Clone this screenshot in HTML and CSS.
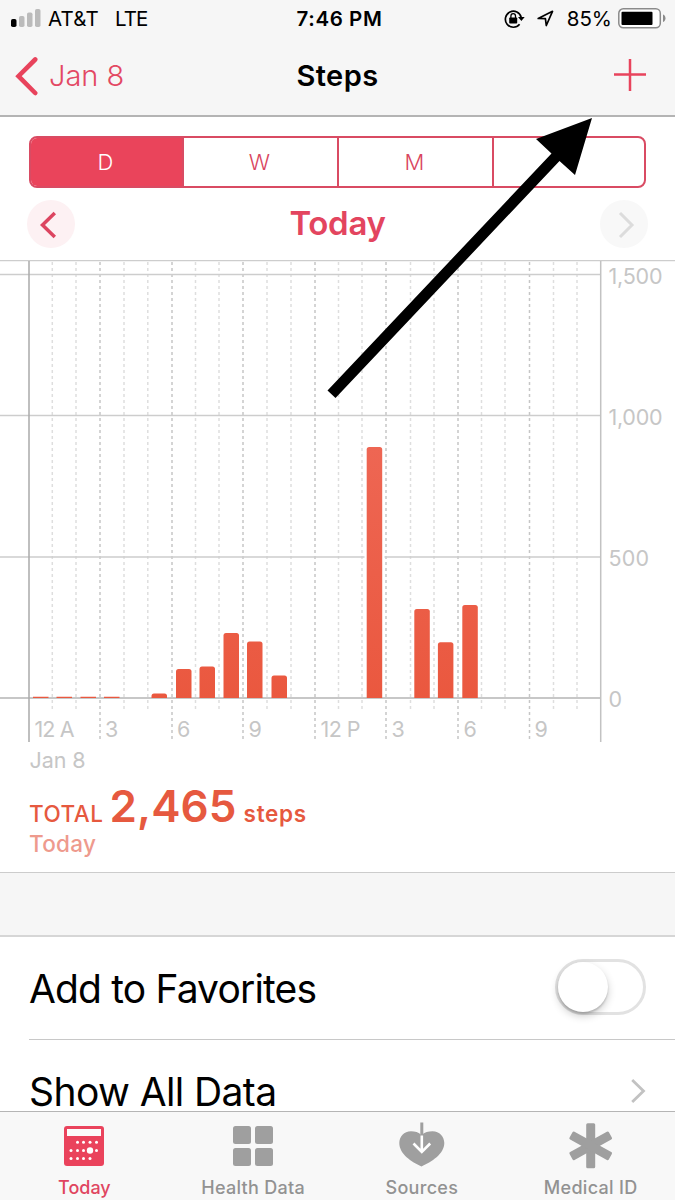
FILE: index.html
```html
<!DOCTYPE html>
<html lang="en">
<head>
<meta charset="utf-8">
<title>Steps</title>
<link rel="stylesheet" href="styles.css">
</head>
<body>
<div class="screen">
  <header class="header">
    <div class="status">
      <div class="status-side">
        <svg class="signal" width="31" height="19" viewBox="0 0 31 19"><rect x="0" y="10" width="5.5" height="8" rx="1.8" fill="#000"/><rect x="8" y="7" width="5.5" height="11" rx="1.8" fill="#bbb"/><rect x="16" y="3.500" width="5.500" height="14.500" rx="1.800" fill="#bbb"/><rect x="24" y="0" width="5.500" height="18" rx="1.800" fill="#bbb"/></svg>
        <span class="carrier">AT&amp;T</span><span class="network">LTE</span>
      </div>
      <span class="clock">7:46 PM</span>
      <div class="status-side status-right">
        <svg class="lock" width="21" height="20" viewBox="0 0 21 20"><path d="M15.600 15.300A8 8 0 1 1 17.200 8.500" fill="none" stroke="#000" stroke-width="1.700"/><path d="M14 8h6.700l-3.300 4z"/><rect x="5.200" y="8.500" width="8" height="6" rx=".8"/><path d="M6.900 9V7a2.300 2.300 0 0 1 4.600 0v2" fill="none" stroke="#000" stroke-width="1.300"/></svg>
        <svg class="locate" width="17" height="17" viewBox="0 0 17 17"><path d="M1.200 8.500 15.500 1.300 9.300 15.500 8.400 8.700z" fill="none" stroke="#000" stroke-width="1.700" stroke-linejoin="round"/></svg>
        <span class="percent">85%</span>
        <svg width="48" height="21" viewBox="0 0 48 21"><rect x=".8" y=".8" width="41.500" height="19" rx="4.500" fill="#fff" stroke="#8a8a8a" stroke-width="1.500"/><rect x="3.500" y="3.700" width="31" height="13.300" rx="1"/><path d="M45 6.500c3.300 1 3.300 6.500 0 7.500z" fill="#8a8a8a"/></svg>
      </div>
    </div>
    <nav class="nav">
      <a class="back"><svg width="24" height="40" viewBox="0 0 24 40"><path d="M21.200 3.500 4.500 20.200 21.200 37" fill="none" stroke="#e8435c" stroke-width="4.600" stroke-linecap="round" stroke-linejoin="miter"/></svg><span>Jan 8</span></a>
      <h1 class="title">Steps</h1>
      <a class="add"><svg width="32" height="32" viewBox="0 0 32 32"><path d="M0 15.500H32M16 0V32" stroke="#e8435c" stroke-width="2.500"/></svg></a>
    </nav>
  </header>

  <main class="content">
    <div class="segments">
      <span class="segment active">D</span><span class="segment">W</span><span class="segment">M</span><span class="segment"></span>
    </div>
    <div class="pager">
      <span class="round prev"><svg width="48" height="48" viewBox="0 0 48 48"><path d="M27.800 13 15.500 25 27.800 37" fill="none" stroke="#dc4560" stroke-width="3.500"/></svg></span>
      <h2 class="period">Today</h2>
      <span class="round next"><svg width="48" height="48" viewBox="0 0 48 48"><path d="M20 13 32 25 20 37" fill="none" stroke="#dcdcdc" stroke-width="3"/></svg></span>
    </div>

    <svg class="chart" width="675" height="520" viewBox="0 260 675 520">
      <defs>
        <linearGradient id="bar" gradientUnits="userSpaceOnUse" x1="0" y1="447" x2="0" y2="698"><stop offset="0" stop-color="#ee6653"/><stop offset="1" stop-color="#ea583f"/></linearGradient>
      </defs>
      <path class="minor" d="M52.300 262V710M76 262V710M124 262V710M147.800 262V710M195.500 262V710M219 262V710M267 262V710M291 262V710M338.500 262V710M362 262V710M410.500 262V710M434 262V710M481.500 262V710M505 262V710M553.500 262V710M577 262V710"/>
      <path class="major" d="M100 262V739M172 262V739M243 262V739M315 262V739M386 262V739M458 262V739M529.500 262V739"/>
      <path class="grid" d="M0 260.500H675M0 274.500H600M0 415.500H600M0 557H600"/>
      <path class="base" d="M0 698H600"/>
      <path class="edge" d="M29 261V742"/><path class="edge right" d="M600.700 261V742"/>
      <path d="M364.500 557h20" stroke="#fff" stroke-width="3"/>
      <g fill="url(#bar)">
        <path d="M33 696.800h15.500v1.200H33zM56.500 696.800H72v1.200H56.500zM80.500 696.800H96v1.200H80.500zM104 696.800h15.500v1.200H104z"/>
        <path d="M151.500 698v-2q0-2.500 2.500-2.500h10.500q2.500 0 2.500 2.500v2z"/>
        <path d="M176 698V671.500q0-2.500 2.500-2.500H189q2.500 0 2.500 2.500V698z"/>
        <path d="M199.500 698V669q0-2.500 2.500-2.500h10.500q2.500 0 2.500 2.500V698z"/>
        <path d="M223.500 698V635.500q0-2.500 2.500-2.500h10.500q2.500 0 2.500 2.500V698z"/>
        <path d="M247 698V644q0-2.500 2.500-2.500H260q2.500 0 2.500 2.500V698z"/>
        <path d="M271.500 698V678q0-2.500 2.500-2.500h10.500q2.500 0 2.500 2.500V698z"/>
        <path d="M366.700 698V449.500q0-2.500 2.500-2.500h10.500q2.500 0 2.500 2.500V698z"/>
        <path d="M414.300 698V611.500q0-2.500 2.500-2.500h10.500q2.500 0 2.500 2.500V698z"/>
        <path d="M437.900 698V644.700q0-2.500 2.500-2.500h10.500q2.500 0 2.500 2.500V698z"/>
        <path d="M462.300 698V607.500q0-2.500 2.500-2.500h10.500q2.500 0 2.500 2.500V698z"/>
      </g>
      <g class="axis">
        <text x="608.500" y="283.500" textLength="54">1,500</text><text x="608.500" y="425" textLength="54">1,000</text><text x="608.500" y="566" textLength="40.500">500</text><text x="608.500" y="707">0</text>
        <text x="34.500" y="737" textLength="40">12 A</text><text x="105" y="737">3</text><text x="177" y="737">6</text><text x="248.500" y="737">9</text><text x="320.500" y="737" textLength="40">12 P</text><text x="391.500" y="737">3</text><text x="463.500" y="737">6</text><text x="534.500" y="737">9</text>
        <text x="29.500" y="768" textLength="56">Jan 8</text>
      </g>
    </svg>

    <div class="summary">
      <p class="total"><span class="label">TOTAL</span><strong class="count">2,465</strong><span class="unit">steps</span></p>
      <p class="when">Today</p>
    </div>
    <div class="band"></div>
    <div class="row">
      <span class="row-label">Add to Favorites</span>
      <span class="switch"><span class="knob"></span></span>
    </div>
    <div class="row last">
      <span class="row-label">Show All Data</span>
      <svg class="chevron" width="15" height="26" viewBox="0 0 15 26"><path d="M1.200 2 12.500 13 1.200 24" fill="none" stroke="#c2c2c2" stroke-width="2.800"/></svg>
    </div>
  </main>

  <footer class="tabs">
    <a class="tab selected">
      <svg width="48" height="48" viewBox="0 0 48 48"><rect x="4" y="5" width="40" height="40" rx="3" fill="#ea435c"/><rect x="7" y="8" width="34" height="7" fill="#fbfbfb"/><g fill="#fff"><circle cx="17.500" cy="21.300" r="1.500"/><circle cx="23.500" cy="21.300" r="1.500"/><circle cx="30" cy="21.300" r="1.500"/><circle cx="36.500" cy="21.300" r="1.500"/><circle cx="11" cy="29.500" r="1.500"/><circle cx="17.500" cy="29.500" r="1.500"/><circle cx="23.500" cy="29.500" r="1.500"/><circle cx="30" cy="29.500" r="3.200"/><circle cx="36.500" cy="29.500" r="1.500"/><circle cx="11" cy="37.500" r="1.500"/><circle cx="17.500" cy="37.500" r="1.500"/><circle cx="23.500" cy="37.500" r="1.500"/><circle cx="30" cy="37.500" r="1.500"/></g></svg>
      <span class="tab-label">Today</span>
    </a>
    <a class="tab">
      <svg width="48" height="48" viewBox="0 0 48 48" fill="#9f9f9f"><rect x="4" y="5" width="18" height="18" rx="2.500"/><rect x="26" y="5" width="18" height="18" rx="2.500"/><rect x="4" y="27" width="18" height="18" rx="2.500"/><rect x="26" y="27" width="18" height="18" rx="2.500"/></svg>
      <span class="tab-label spaced">Health Data</span>
    </a>
    <a class="tab">
      <svg width="48" height="48" viewBox="0 0 48 48"><path d="M23.500 14.200C20.500 11 17 10.300 13 10.300 6 10.300 1.300 16 1.300 22 1.300 33 13.500 41 23.500 45.400 33.500 41 46.300 33 46.300 22 46.300 16 41.500 10.300 34.500 10.300 30.500 10.300 26.500 11 23.500 14.200z" fill="#9f9f9f"/><path d="M23.800 1.500V14.500" stroke="#9f9f9f" stroke-width="3"/><path d="M23.800 14.500V30M15.500 22.500 23.800 31 32.200 22.500" fill="none" stroke="#fff" stroke-width="2.600"/></svg>
      <span class="tab-label spaced">Sources</span>
    </a>
    <a class="tab">
      <svg width="48" height="48" viewBox="0 0 48 48" fill="#9f9f9f"><rect x="19.200" y="2.300" width="9" height="45" rx="1.500"/><rect x="19.200" y="2.300" width="9" height="45" rx="1.500" transform="rotate(61 23.700 24.800)"/><rect x="19.200" y="2.300" width="9" height="45" rx="1.500" transform="rotate(-61 23.700 24.800)"/></svg>
      <span class="tab-label spaced">Medical ID</span>
    </a>
  </footer>

  <svg class="pointer" width="675" height="1200" viewBox="0 0 675 1200"><path d="M592 118 575 175 559.500 161 335.500 398 327.500 390.500 551.500 153.500 536 139z"/></svg>
</div>
</body>
</html>
```

FILE: styles.css
```css
* { box-sizing: border-box; }
body { margin: 0; background: #fff; font-family: Inter, "Liberation Sans", sans-serif; color: #000; }
h1, h2, p { margin: 0; }
svg { display: block; flex: none; }
.screen { position: relative; width: 675px; height: 1200px; overflow: hidden; display: flex; flex-direction: column; background: #fff; }

.header { height: 117px; flex: none; background: #f6f6f6; border-bottom: 2px solid #b4b4b4; }
.status { display: grid; grid-template-columns: 1fr auto 1fr; align-items: center; height: 37px; padding: 0 9px 0 11px; font-size: 20.500px; line-height: 37px; white-space: nowrap; }
.status-side { display: flex; align-items: center; }
.status-right { justify-content: flex-end; }
.carrier { margin-left: 6px; letter-spacing: .2px; }
.network { margin-left: 16px; letter-spacing: -.9px; }
.clock { margin-left: 2px; font-weight: 600; letter-spacing: .6px; }
.locate { margin-left: 12px; }
.percent { margin: 0 6px 0 13px; }
.nav { display: grid; grid-template-columns: 1fr auto 1fr; align-items: center; height: 77px; padding: 0 14px; }
.back { display: flex; align-items: center; gap: 11px; color: #e34863; font-size: 29px; font-weight: 350; }
.title { font-size: 29px; font-weight: 600; letter-spacing: .4px; }
.add { justify-self: end; margin: 0 15px 1px 0; }

.content { display: flex; flex-direction: column; height: 994px; flex: none; }
.segments { display: grid; grid-template-columns: 151px 155px 155px 1fr; height: 52px; margin: 19px 29px 0; flex: none; border: 2px solid #d94b63; border-radius: 8px; overflow: hidden; }
.segment { display: flex; align-items: center; justify-content: center; padding: 0 2px 1px 0; font-size: 22px; font-weight: 300; color: #d94560; border-left: 2px solid #d94b63; }
.segment.active { background: #ea445b; color: #fff; border-left: 0; }
.pager { display: flex; justify-content: space-between; align-items: center; height: 72px; padding: 0 27px; flex: none; }
.round { border-radius: 50%; }
.prev { background: #fdf1f3; }
.next { background: #f8f8f8; }
.period { font-size: 33px; font-weight: 600; letter-spacing: -.3px; line-height: 40px; margin-bottom: 2px; color: #e3455f; }
.minor, .major, .grid, .base, .edge { fill: none; }
.minor { stroke: #dedede; stroke-width: 1.500; stroke-dasharray: 3 3; }
.major { stroke: #c6c6c6; stroke-width: 1.500; stroke-dasharray: 3 3; }
.grid { stroke: #cdcdcd; stroke-width: 1.300; }
.base { stroke: #b5b5b5; stroke-width: 1.500; }
.edge { stroke: #aaa; stroke-width: 1.500; }
.edge.right { stroke: #c2c2c2; }
.axis { font-size: 21.500px; fill: #c6c6c6; }

.summary { height: 92px; padding-left: 29px; flex: none; }
.total { display: flex; align-items: baseline; height: 50px; line-height: 53px; color: #e6593f; }
.label { font-size: 22.500px; font-weight: 500; letter-spacing: .5px; }
.count { margin-left: 6px; font-size: 44px; font-weight: 600; letter-spacing: .1px; }
.unit { margin-left: 7px; font-size: 22.500px; font-weight: 600; letter-spacing: .7px; }
.when { font-size: 22.500px; font-weight: 500; line-height: 28px; letter-spacing: .3px; color: #ee9a8d; }
.band { height: 65px; flex: none; background: #f6f6f6; border-top: 1px solid #ccc; border-bottom: 2px solid #d6d6d6; }
.row { display: flex; align-items: center; justify-content: space-between; height: 103px; margin-left: 29px; padding-right: 29px; border-bottom: 1px solid #c8c8c8; flex: none; }
.row.last { height: 71px; padding-top: 31px; border-bottom: 0; }
.row-label { margin-top: 2px; font-size: 39px; line-height: 40px; letter-spacing: -.85px; white-space: nowrap; }
.last .row-label { margin-top: 0; padding-top: 2px; letter-spacing: -.6px; }
.switch { width: 91px; height: 56px; margin-bottom: 2px; border: 3px solid #e2e2e2; border-radius: 28px; }
.knob { display: block; width: 50px; height: 50px; border-radius: 50%; background: #fff; box-shadow: 0 4px 9px rgba(0,0,0,.2), 0 2px 2px rgba(0,0,0,.16); }

.tabs { display: grid; grid-template-columns: repeat(4, 1fr); height: 89px; flex: none; background: #f8f8f8; border-top: 1px solid #b5b5b5; }
.tab { display: flex; flex-direction: column; align-items: center; padding-top: 9px; color: #929292; }
.selected { color: #e04560; }
.tab-label { margin-top: 8px; font-size: 18px; line-height: 22px; font-weight: 500; white-space: nowrap; }
.spaced { letter-spacing: .3px; }
.pointer { position: absolute; left: 0; top: 0; pointer-events: none; }
```
